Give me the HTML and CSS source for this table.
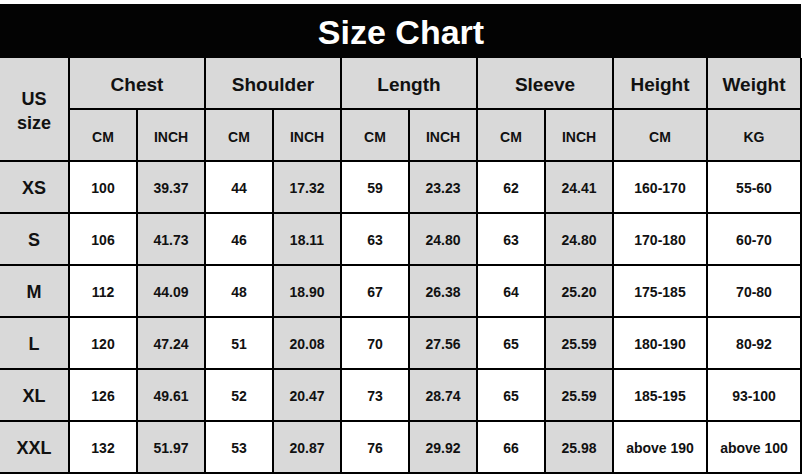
FILE: index.html
```html
<!DOCTYPE html>
<html>
<head>
<meta charset="utf-8">
<link rel="stylesheet" href="styles.css">
</head>
<body>
<div class="chart">
  <div class="title">Size Chart</div>
  <div class="grid">
    <div class="cell gray us">US<br>size</div>
    <div class="cell gray head span2">Chest</div>
    <div class="cell gray head span2">Shoulder</div>
    <div class="cell gray head span2">Length</div>
    <div class="cell gray head span2">Sleeve</div>
    <div class="cell gray head">Height</div>
    <div class="cell gray head">Weight</div>

    <div class="cell gray sub">CM</div>
    <div class="cell gray sub">INCH</div>
    <div class="cell gray sub">CM</div>
    <div class="cell gray sub">INCH</div>
    <div class="cell gray sub">CM</div>
    <div class="cell gray sub">INCH</div>
    <div class="cell gray sub">CM</div>
    <div class="cell gray sub">INCH</div>
    <div class="cell gray sub">CM</div>
    <div class="cell gray sub">KG</div>

    <div class="cell gray size">XS</div>
    <div class="cell">100</div><div class="cell gray">39.37</div>
    <div class="cell">44</div><div class="cell gray">17.32</div>
    <div class="cell">59</div><div class="cell gray">23.23</div>
    <div class="cell">62</div><div class="cell gray">24.41</div>
    <div class="cell">160-170</div><div class="cell">55-60</div>

    <div class="cell gray size">S</div>
    <div class="cell">106</div><div class="cell gray">41.73</div>
    <div class="cell">46</div><div class="cell gray">18.11</div>
    <div class="cell">63</div><div class="cell gray">24.80</div>
    <div class="cell">63</div><div class="cell gray">24.80</div>
    <div class="cell">170-180</div><div class="cell">60-70</div>

    <div class="cell gray size">M</div>
    <div class="cell">112</div><div class="cell gray">44.09</div>
    <div class="cell">48</div><div class="cell gray">18.90</div>
    <div class="cell">67</div><div class="cell gray">26.38</div>
    <div class="cell">64</div><div class="cell gray">25.20</div>
    <div class="cell">175-185</div><div class="cell">70-80</div>

    <div class="cell gray size">L</div>
    <div class="cell">120</div><div class="cell gray">47.24</div>
    <div class="cell">51</div><div class="cell gray">20.08</div>
    <div class="cell">70</div><div class="cell gray">27.56</div>
    <div class="cell">65</div><div class="cell gray">25.59</div>
    <div class="cell">180-190</div><div class="cell">80-92</div>

    <div class="cell gray size">XL</div>
    <div class="cell">126</div><div class="cell gray">49.61</div>
    <div class="cell">52</div><div class="cell gray">20.47</div>
    <div class="cell">73</div><div class="cell gray">28.74</div>
    <div class="cell">65</div><div class="cell gray">25.59</div>
    <div class="cell">185-195</div><div class="cell">93-100</div>

    <div class="cell gray size">XXL</div>
    <div class="cell">132</div><div class="cell gray">51.97</div>
    <div class="cell">53</div><div class="cell gray">20.87</div>
    <div class="cell">76</div><div class="cell gray">29.92</div>
    <div class="cell">66</div><div class="cell gray">25.98</div>
    <div class="cell">above 190</div><div class="cell">above 100</div>
  </div>
</div>
</body>
</html>
```
FILE: styles.css
```css
html, body {
  margin: 0;
  padding: 0;
  background: #ffffff;
}

body {
  font-family: "Liberation Sans", Arial, sans-serif;
  font-weight: bold;
  color: #111111;
}

.chart {
  width: 802px;
  padding-top: 4px;
}

.title {
  width: 801px;
  height: 54px;
  background: #030303;
  color: #ffffff;
  font-size: 34px;
  line-height: 54px;
  text-align: center;
  padding-left: 1px;
  padding-top: 1px;
  box-sizing: border-box;
}

.grid {
  display: grid;
  grid-template-columns: 68px repeat(8, 66px) 92px 92px;
  grid-template-rows: repeat(8, 50px);
  gap: 2px;
  background: #000000;
  padding: 0 2px 2px 0;
  width: 802px;
  box-sizing: border-box;
}

.cell {
  background: #ffffff;
  display: flex;
  align-items: center;
  justify-content: center;
  text-align: center;
  font-size: 14px;
  padding-top: 2px;
}

.gray {
  background: #d9d9d9;
}

.us {
  grid-row: span 2;
  font-size: 18px;
  line-height: 24px;
  padding-top: 4px;
}

.span2 {
  grid-column: span 2;
}

.head {
  font-size: 19px;
  padding-top: 3px;
}

.sub {
  font-size: 14px;
  padding-top: 4px;
}

.size {
  font-size: 18px;
  padding-top: 3px;
}
```
